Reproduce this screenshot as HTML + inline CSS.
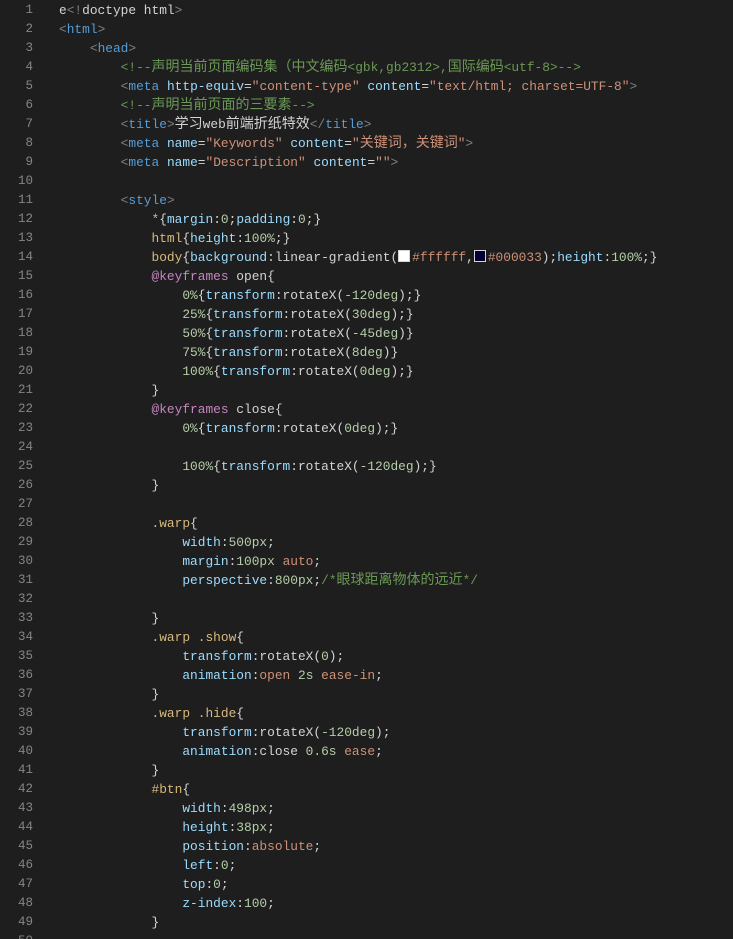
<!DOCTYPE html>
<html><head><meta charset="utf-8"><style>
html,body{margin:0;padding:0;background:#1e1e1e;width:733px;height:939px;overflow:hidden}
.w{position:relative;font-family:"Liberation Mono","Noto Sans CJK SC",monospace;font-size:12.85px;line-height:19px;color:#d4d4d4;padding-top:1px}
.l{height:19px;white-space:pre;position:relative}
.n{position:absolute;left:0;width:33px;text-align:right;color:#858585;font-size:12.5px}
.c0{position:absolute;left:59px}
.z{font-size:14px;line-height:19px}
.t{color:#569cd6}.p{color:#808080}.a{color:#9cdcfe}.s{color:#ce9178}.c{color:#6a9955}.k{color:#d7ba7d}.u{color:#b5cea8}.m{color:#c586c0}
.sw{display:inline-block;width:10px;height:10px;border:1px solid #d4d4d4;vertical-align:-1px;margin-right:2px}
</style></head><body><div class="w">
<div class="l"><span class="n">1</span><span class="c0">e<span class="p">&lt;!</span>doctype html<span class="p">&gt;</span></span></div>
<div class="l"><span class="n">2</span><span class="c0"><span class="p">&lt;</span><span class="t">html</span><span class="p">&gt;</span></span></div>
<div class="l"><span class="n">3</span><span class="c0">    <span class="p">&lt;</span><span class="t">head</span><span class="p">&gt;</span></span></div>
<div class="l"><span class="n">4</span><span class="c0">        <span class="c">&lt;!--<span class="z">声明当前页面编码集（中文编码</span>&lt;gbk,gb2312&gt;,<span class="z">国际编码</span>&lt;utf-8&gt;--&gt;</span></span></div>
<div class="l"><span class="n">5</span><span class="c0">        <span class="p">&lt;</span><span class="t">meta</span> <span class="a">http-equiv</span>=<span class="s">"content-type"</span> <span class="a">content</span>=<span class="s">"text/html; charset=UTF-8"</span><span class="p">&gt;</span></span></div>
<div class="l"><span class="n">6</span><span class="c0">        <span class="c">&lt;!--<span class="z">声明当前页面的三要素</span>--&gt;</span></span></div>
<div class="l"><span class="n">7</span><span class="c0">        <span class="p">&lt;</span><span class="t">title</span><span class="p">&gt;</span><span class="z">学习</span>web<span class="z">前端折纸特效</span><span class="p">&lt;/</span><span class="t">title</span><span class="p">&gt;</span></span></div>
<div class="l"><span class="n">8</span><span class="c0">        <span class="p">&lt;</span><span class="t">meta</span> <span class="a">name</span>=<span class="s">"Keywords"</span> <span class="a">content</span>=<span class="s">"<span class="z">关键词，关键词</span>"</span><span class="p">&gt;</span></span></div>
<div class="l"><span class="n">9</span><span class="c0">        <span class="p">&lt;</span><span class="t">meta</span> <span class="a">name</span>=<span class="s">"Description"</span> <span class="a">content</span>=<span class="s">""</span><span class="p">&gt;</span></span></div>
<div class="l"><span class="n">10</span></div>
<div class="l"><span class="n">11</span><span class="c0">        <span class="p">&lt;</span><span class="t">style</span><span class="p">&gt;</span></span></div>
<div class="l"><span class="n">12</span><span class="c0">            <span class="k">*</span>{<span class="a">margin</span>:<span class="u">0</span>;<span class="a">padding</span>:<span class="u">0</span>;}</span></div>
<div class="l"><span class="n">13</span><span class="c0">            <span class="k">html</span>{<span class="a">height</span>:<span class="u">100%</span>;}</span></div>
<div class="l"><span class="n">14</span><span class="c0">            <span class="k">body</span>{<span class="a">background</span>:linear-gradient(<span class="sw" style="background:#fff"></span><span class="s">#ffffff</span>,<span class="sw" style="background:#000033"></span><span class="s">#000033</span>);<span class="a">height</span>:<span class="u">100%</span>;}</span></div>
<div class="l"><span class="n">15</span><span class="c0">            <span class="m">@keyframes</span> open{</span></div>
<div class="l"><span class="n">16</span><span class="c0">                <span class="u">0%</span>{<span class="a">transform</span>:rotateX(<span class="u">-120deg</span>);}</span></div>
<div class="l"><span class="n">17</span><span class="c0">                <span class="u">25%</span>{<span class="a">transform</span>:rotateX(<span class="u">30deg</span>);}</span></div>
<div class="l"><span class="n">18</span><span class="c0">                <span class="u">50%</span>{<span class="a">transform</span>:rotateX(<span class="u">-45deg</span>)}</span></div>
<div class="l"><span class="n">19</span><span class="c0">                <span class="u">75%</span>{<span class="a">transform</span>:rotateX(<span class="u">8deg</span>)}</span></div>
<div class="l"><span class="n">20</span><span class="c0">                <span class="u">100%</span>{<span class="a">transform</span>:rotateX(<span class="u">0deg</span>);}</span></div>
<div class="l"><span class="n">21</span><span class="c0">            }</span></div>
<div class="l"><span class="n">22</span><span class="c0">            <span class="m">@keyframes</span> close{</span></div>
<div class="l"><span class="n">23</span><span class="c0">                <span class="u">0%</span>{<span class="a">transform</span>:rotateX(<span class="u">0deg</span>);}</span></div>
<div class="l"><span class="n">24</span></div>
<div class="l"><span class="n">25</span><span class="c0">                <span class="u">100%</span>{<span class="a">transform</span>:rotateX(<span class="u">-120deg</span>);}</span></div>
<div class="l"><span class="n">26</span><span class="c0">            }</span></div>
<div class="l"><span class="n">27</span></div>
<div class="l"><span class="n">28</span><span class="c0">            <span class="k">.warp</span>{</span></div>
<div class="l"><span class="n">29</span><span class="c0">                <span class="a">width</span>:<span class="u">500px</span>;</span></div>
<div class="l"><span class="n">30</span><span class="c0">                <span class="a">margin</span>:<span class="u">100px</span> <span class="s">auto</span>;</span></div>
<div class="l"><span class="n">31</span><span class="c0">                <span class="a">perspective</span>:<span class="u">800px</span>;<span class="c">/*<span class="z">眼球距离物体的远近</span>*/</span></span></div>
<div class="l"><span class="n">32</span></div>
<div class="l"><span class="n">33</span><span class="c0">            }</span></div>
<div class="l"><span class="n">34</span><span class="c0">            <span class="k">.warp .show</span>{</span></div>
<div class="l"><span class="n">35</span><span class="c0">                <span class="a">transform</span>:rotateX(<span class="u">0</span>);</span></div>
<div class="l"><span class="n">36</span><span class="c0">                <span class="a">animation</span>:<span class="s">open</span> <span class="u">2s</span> <span class="s">ease-in</span>;</span></div>
<div class="l"><span class="n">37</span><span class="c0">            }</span></div>
<div class="l"><span class="n">38</span><span class="c0">            <span class="k">.warp .hide</span>{</span></div>
<div class="l"><span class="n">39</span><span class="c0">                <span class="a">transform</span>:rotateX(<span class="u">-120deg</span>);</span></div>
<div class="l"><span class="n">40</span><span class="c0">                <span class="a">animation</span>:close <span class="u">0.6s</span> <span class="s">ease</span>;</span></div>
<div class="l"><span class="n">41</span><span class="c0">            }</span></div>
<div class="l"><span class="n">42</span><span class="c0">            <span class="k">#btn</span>{</span></div>
<div class="l"><span class="n">43</span><span class="c0">                <span class="a">width</span>:<span class="u">498px</span>;</span></div>
<div class="l"><span class="n">44</span><span class="c0">                <span class="a">height</span>:<span class="u">38px</span>;</span></div>
<div class="l"><span class="n">45</span><span class="c0">                <span class="a">position</span>:<span class="s">absolute</span>;</span></div>
<div class="l"><span class="n">46</span><span class="c0">                <span class="a">left</span>:<span class="u">0</span>;</span></div>
<div class="l"><span class="n">47</span><span class="c0">                <span class="a">top</span>:<span class="u">0</span>;</span></div>
<div class="l"><span class="n">48</span><span class="c0">                <span class="a">z-index</span>:<span class="u">100</span>;</span></div>
<div class="l"><span class="n">49</span><span class="c0">            }</span></div>
<div class="l"><span class="n">50</span></div>
</div></body></html>
